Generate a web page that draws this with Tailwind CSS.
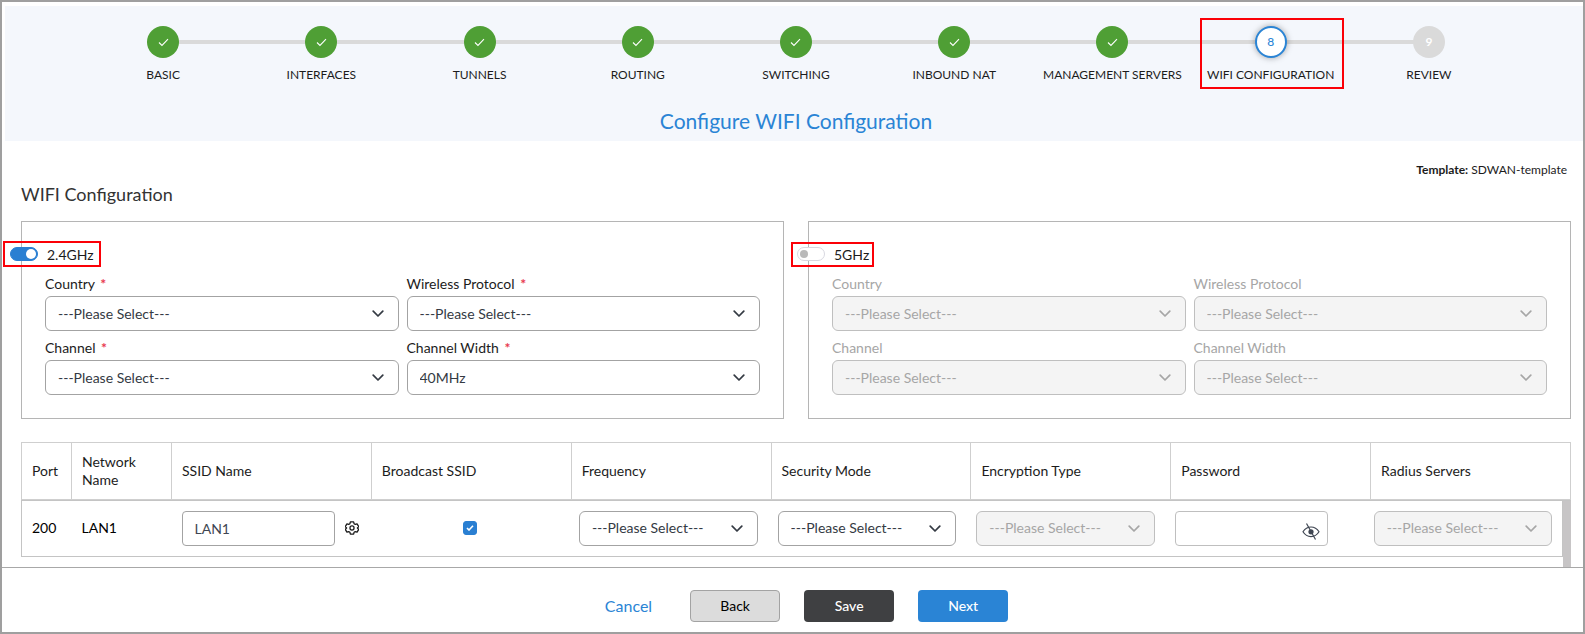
<!DOCTYPE html>
<html lang="en">
<head>
    <meta charset="UTF-8">
    <meta name="viewport" content="width=device-width, initial-scale=1.0">
    <title>Configure WIFI Configuration</title>
    <script src="https://cdn.jsdelivr.net/npm/@tailwindcss/browser@4"></script>
</head>
<body class="bg-white font-['Lato',sans-serif] text-sm text-[#1c1c1c]">

<!-- Shared icons -->
<svg class="hidden">
    <symbol id="check" viewBox="0 0 12 10"><path d="M1 5l3.3 3.2L11 1.2" fill="none" stroke="currentColor" stroke-width="1.2"/></symbol>
    <symbol id="chevron" viewBox="0 0 12 8"><path d="M1.2 1.2L6 6l4.8-4.8" fill="none" stroke="currentColor" stroke-width="1.7" stroke-linecap="round" stroke-linejoin="round"/></symbol>
</svg>

<div class="flex h-screen flex-col border-2 border-[#9f9f9f]">
    <!-- Wizard steps -->
    <header class="mt-1 ml-[3px] bg-[#f4f7fc] pt-5 pr-[75px] pb-1.5 pl-[79px]">
        <ol class="grid grid-cols-9 text-xs leading-[18px]">
            <li class="relative flex flex-col items-center gap-2">
                <span class="absolute top-3.5 left-1/2 h-1 w-full bg-[#dadada]"></span>
                <span class="relative flex size-8 items-center justify-center rounded-full bg-[#4f9f35] text-white"><svg class="h-[9px] w-[11px]"><use href="#check"/></svg></span>
                <span class="whitespace-nowrap">BASIC</span>
            </li>
            <li class="relative flex flex-col items-center gap-2">
                <span class="absolute top-3.5 left-1/2 h-1 w-full bg-[#dadada]"></span>
                <span class="relative flex size-8 items-center justify-center rounded-full bg-[#4f9f35] text-white"><svg class="h-[9px] w-[11px]"><use href="#check"/></svg></span>
                <span class="whitespace-nowrap">INTERFACES</span>
            </li>
            <li class="relative flex flex-col items-center gap-2">
                <span class="absolute top-3.5 left-1/2 h-1 w-full bg-[#dadada]"></span>
                <span class="relative flex size-8 items-center justify-center rounded-full bg-[#4f9f35] text-white"><svg class="h-[9px] w-[11px]"><use href="#check"/></svg></span>
                <span class="whitespace-nowrap">TUNNELS</span>
            </li>
            <li class="relative flex flex-col items-center gap-2">
                <span class="absolute top-3.5 left-1/2 h-1 w-full bg-[#dadada]"></span>
                <span class="relative flex size-8 items-center justify-center rounded-full bg-[#4f9f35] text-white"><svg class="h-[9px] w-[11px]"><use href="#check"/></svg></span>
                <span class="whitespace-nowrap">ROUTING</span>
            </li>
            <li class="relative flex flex-col items-center gap-2">
                <span class="absolute top-3.5 left-1/2 h-1 w-full bg-[#dadada]"></span>
                <span class="relative flex size-8 items-center justify-center rounded-full bg-[#4f9f35] text-white"><svg class="h-[9px] w-[11px]"><use href="#check"/></svg></span>
                <span class="whitespace-nowrap">SWITCHING</span>
            </li>
            <li class="relative flex flex-col items-center gap-2">
                <span class="absolute top-3.5 left-1/2 h-1 w-full bg-[#dadada]"></span>
                <span class="relative flex size-8 items-center justify-center rounded-full bg-[#4f9f35] text-white"><svg class="h-[9px] w-[11px]"><use href="#check"/></svg></span>
                <span class="whitespace-nowrap">INBOUND NAT</span>
            </li>
            <li class="relative flex flex-col items-center gap-2">
                <span class="absolute top-3.5 left-1/2 h-1 w-full bg-[#dadada]"></span>
                <span class="relative flex size-8 items-center justify-center rounded-full bg-[#4f9f35] text-white"><svg class="h-[9px] w-[11px]"><use href="#check"/></svg></span>
                <span class="whitespace-nowrap">MANAGEMENT SERVERS</span>
            </li>
            <li class="relative flex flex-col items-center gap-2" aria-current="step">
                <span class="absolute top-3.5 left-1/2 h-1 w-full bg-[#dadada]"></span>
                <span class="relative flex size-8 items-center justify-center rounded-full border-2 border-[#2a84d5] bg-white font-medium text-[#2a84d5] shadow-[0_0_6px_rgba(0,0,0,0.35)]">8</span>
                <span class="whitespace-nowrap">WIFI CONFIGURATION</span>
                <span class="absolute -top-2 left-1/2 h-[71px] w-36 -translate-x-[71px] border-2 border-[#fb0007]"></span>
            </li>
            <li class="relative flex flex-col items-center gap-2">
                <span class="relative flex size-8 items-center justify-center rounded-full bg-[#dadada] font-bold text-white">9</span>
                <span class="whitespace-nowrap">REVIEW</span>
            </li>
        </ol>
        <h1 class="mt-[23px] text-center text-[21px] leading-7 text-[#2a84d5]">Configure WIFI Configuration</h1>
    </header>

    <main class="flex min-h-0 flex-1 flex-col overflow-hidden pt-[19px] pr-3 pl-[19px]">
        <p class="pr-1 text-right text-xs leading-5"><b>Template:</b> SDWAN-template</p>
        <h2 class="mt-0.5 text-lg leading-6 text-[#333]">WIFI Configuration</h2>

        <!-- Radio bands -->
        <div class="mt-[15px] grid grid-cols-2 gap-6">
            <section class="border border-[#b5b5b5] px-[23px] pt-[22px] pb-[23px]">
                <label class="relative -ml-[35px] flex w-fit items-center gap-[9px] leading-5">
                    <span class="absolute top-[-3px] left-[-7px] h-[26px] w-[98px] border-2 border-[#fb0007]"></span>
                    <input type="checkbox" role="switch" checked class="h-3.5 w-7 appearance-none rounded-full border border-[#d8d8e0] bg-white p-0.5 before:block before:size-2 before:rounded-full before:bg-[#b9b9b9] checked:border-[#2a7fd2] checked:bg-[#2a7fd2] checked:p-px checked:before:ml-auto checked:before:size-2.5 checked:before:bg-white">
                    <span class="pt-0.5 leading-[18px]">2.4GHz</span>
                </label>
                <div class="mt-2.5 grid grid-cols-2 gap-x-2 gap-y-[7px]">
                    <div class="flex flex-col gap-0.5">
                        <label for="country24" class="leading-5">Country <span class="ml-0.5 font-bold text-[#e8384f]">*</span></label>
                        <div class="relative">
                            <select id="country24" class="h-[35px] w-full appearance-none rounded-md border border-[#a3a3a3] bg-white px-3 text-[#343a43]"><option>---Please Select---</option></select>
                            <svg class="pointer-events-none absolute top-3.5 right-[15px] h-2 w-3 text-[#343a43]"><use href="#chevron"/></svg>
                        </div>
                    </div>
                    <div class="flex flex-col gap-0.5">
                        <label for="protocol24" class="leading-5">Wireless Protocol <span class="ml-0.5 font-bold text-[#e8384f]">*</span></label>
                        <div class="relative">
                            <select id="protocol24" class="h-[35px] w-full appearance-none rounded-md border border-[#a3a3a3] bg-white px-3 text-[#343a43]"><option>---Please Select---</option></select>
                            <svg class="pointer-events-none absolute top-3.5 right-[15px] h-2 w-3 text-[#343a43]"><use href="#chevron"/></svg>
                        </div>
                    </div>
                    <div class="flex flex-col gap-0.5">
                        <label for="channel24" class="leading-5">Channel <span class="ml-0.5 font-bold text-[#e8384f]">*</span></label>
                        <div class="relative">
                            <select id="channel24" class="h-[35px] w-full appearance-none rounded-md border border-[#a3a3a3] bg-white px-3 text-[#343a43]"><option>---Please Select---</option></select>
                            <svg class="pointer-events-none absolute top-3.5 right-[15px] h-2 w-3 text-[#343a43]"><use href="#chevron"/></svg>
                        </div>
                    </div>
                    <div class="flex flex-col gap-0.5">
                        <label for="width24" class="leading-5">Channel Width <span class="ml-0.5 font-bold text-[#e8384f]">*</span></label>
                        <div class="relative">
                            <select id="width24" class="h-[35px] w-full appearance-none rounded-md border border-[#a3a3a3] bg-white px-3 text-[#343a43]"><option>40MHz</option></select>
                            <svg class="pointer-events-none absolute top-3.5 right-[15px] h-2 w-3 text-[#343a43]"><use href="#chevron"/></svg>
                        </div>
                    </div>
                </div>
            </section>

            <section class="border border-[#b5b5b5] px-[23px] pt-[22px] pb-[23px]">
                <label class="relative -ml-[35px] flex w-fit items-center gap-[9px] leading-5">
                    <span class="absolute top-[-2px] left-[-6px] h-[25px] w-[83px] border-2 border-[#fb0007]"></span>
                    <input type="checkbox" role="switch" class="h-3.5 w-7 appearance-none rounded-full border border-[#d8d8e0] bg-white p-0.5 before:block before:size-2 before:rounded-full before:bg-[#b9b9b9] checked:border-[#2a7fd2] checked:bg-[#2a7fd2] checked:p-px checked:before:ml-auto checked:before:size-2.5 checked:before:bg-white">
                    <span class="pt-0.5 leading-[18px]">5GHz</span>
                </label>
                <div class="mt-2.5 grid grid-cols-2 gap-x-2 gap-y-[7px] text-[#a6a6a6]">
                    <div class="flex flex-col gap-0.5">
                        <label for="country5" class="leading-5">Country</label>
                        <div class="relative">
                            <select id="country5" disabled class="h-[35px] w-full appearance-none rounded-md border border-[#bfbfbf] bg-[#f4f4f4] px-3 text-[#a6a6a6] opacity-100"><option>---Please Select---</option></select>
                            <svg class="pointer-events-none absolute top-3.5 right-[15px] h-2 w-3"><use href="#chevron"/></svg>
                        </div>
                    </div>
                    <div class="flex flex-col gap-0.5">
                        <label for="protocol5" class="leading-5">Wireless Protocol</label>
                        <div class="relative">
                            <select id="protocol5" disabled class="h-[35px] w-full appearance-none rounded-md border border-[#bfbfbf] bg-[#f4f4f4] px-3 text-[#a6a6a6] opacity-100"><option>---Please Select---</option></select>
                            <svg class="pointer-events-none absolute top-3.5 right-[15px] h-2 w-3"><use href="#chevron"/></svg>
                        </div>
                    </div>
                    <div class="flex flex-col gap-0.5">
                        <label for="channel5" class="leading-5">Channel</label>
                        <div class="relative">
                            <select id="channel5" disabled class="h-[35px] w-full appearance-none rounded-md border border-[#bfbfbf] bg-[#f4f4f4] px-3 text-[#a6a6a6] opacity-100"><option>---Please Select---</option></select>
                            <svg class="pointer-events-none absolute top-3.5 right-[15px] h-2 w-3"><use href="#chevron"/></svg>
                        </div>
                    </div>
                    <div class="flex flex-col gap-0.5">
                        <label for="width5" class="leading-5">Channel Width</label>
                        <div class="relative">
                            <select id="width5" disabled class="h-[35px] w-full appearance-none rounded-md border border-[#bfbfbf] bg-[#f4f4f4] px-3 text-[#a6a6a6] opacity-100"><option>---Please Select---</option></select>
                            <svg class="pointer-events-none absolute top-3.5 right-[15px] h-2 w-3"><use href="#chevron"/></svg>
                        </div>
                    </div>
                </div>
            </section>
        </div>

        <table class="mt-[23px] w-full table-fixed border-collapse leading-[18px]">
            <thead>
                <tr class="h-[57px] text-left *:border *:border-[#cfcfcf] *:px-2.5 *:font-normal">
                    <th class="w-[50px]">Port</th>
                    <th class="w-[100px]">Network Name</th>
                    <th>SSID Name</th>
                    <th>Broadcast SSID</th>
                    <th>Frequency</th>
                    <th>Security Mode</th>
                    <th>Encryption Type</th>
                    <th>Password</th>
                    <th>Radius Servers</th>
                </tr>
            </thead>
        </table>
        <div class="flex min-h-0 flex-1 border-t border-[#c4c4c4]">
            <div class="min-w-0 flex-1">
                <table class="w-full table-fixed border-collapse border-r border-b border-l border-[#c4c4c4] text-black">
                    <tbody>
                        <tr class="h-[55px] *:px-2.5">
                            <td class="w-[50px]">200</td>
                            <td class="w-[100px]">LAN1</td>
                            <td>
                                <div class="flex items-center gap-2.5">
                                    <input type="text" value="LAN1" aria-label="SSID Name" class="h-[35px] w-[153px] rounded border border-[#a3a3a3] px-3 text-[#3f4652]">
                                    <button type="button" aria-label="SSID settings" class="text-[#1c1c1c]">
                                        <svg class="size-3.5" viewBox="0 0 24 24" fill="none" stroke="currentColor" stroke-width="2.2" stroke-linejoin="round">
                                            <path d="M9.2 1.5h5.6l.8 3.2 2 1.1 3.1-.9 2.8 4.7-2.3 2.3v.2l2.3 2.3-2.8 4.7-3.1-.9-2 1.1-.8 3.2H9.2l-.8-3.2-2-1.1-3.1.9-2.8-4.7 2.3-2.3v-.2L.5 9.6l2.8-4.7 3.1.9 2-1.1z"/>
                                            <circle cx="12" cy="12" r="3.5"/>
                                        </svg>
                                    </button>
                                </div>
                            </td>
                            <td>
                                <div class="grid place-items-center">
                                    <input type="checkbox" checked aria-label="Broadcast SSID" class="peer col-start-1 row-start-1 size-3.5 appearance-none rounded-[3px] border border-[#a3a3a3] checked:border-[#2a7fd2] checked:bg-[#2a7fd2]">
                                    <svg class="pointer-events-none col-start-1 row-start-1 hidden h-1.5 w-2 text-white peer-checked:block" viewBox="0 0 8 6" fill="none" stroke="currentColor" stroke-width="1.6"><path d="M1 3l2 2 4-4.2"/></svg>
                                </div>
                            </td>
                            <td>
                                <div class="relative">
                                    <select aria-label="Frequency" class="h-[35px] w-full appearance-none rounded-md border border-[#a3a3a3] bg-white px-3 text-[#343a43]"><option>---Please Select---</option></select>
                                    <svg class="pointer-events-none absolute top-3.5 right-[15px] h-2 w-3 text-[#343a43]"><use href="#chevron"/></svg>
                                </div>
                            </td>
                            <td>
                                <div class="relative">
                                    <select aria-label="Security Mode" class="h-[35px] w-full appearance-none rounded-md border border-[#a3a3a3] bg-white px-3 text-[#343a43]"><option>---Please Select---</option></select>
                                    <svg class="pointer-events-none absolute top-3.5 right-[15px] h-2 w-3 text-[#343a43]"><use href="#chevron"/></svg>
                                </div>
                            </td>
                            <td>
                                <div class="relative text-[#a6a6a6]">
                                    <select aria-label="Encryption Type" disabled class="h-[35px] w-full appearance-none rounded-md border border-[#bfbfbf] bg-[#f4f4f4] px-3 text-[#a6a6a6] opacity-100"><option>---Please Select---</option></select>
                                    <svg class="pointer-events-none absolute top-3.5 right-[15px] h-2 w-3"><use href="#chevron"/></svg>
                                </div>
                            </td>
                            <td>
                                <div class="relative w-[153px]">
                                    <input type="password" aria-label="Password" class="block h-[35px] w-full rounded border border-[#bfbfbf] pr-8 pl-3">
                                    <button type="button" aria-label="Show password" class="absolute top-3 right-2 text-[#3f4652]">
                                        <svg class="h-[17px] w-[18px]" viewBox="0 0 18 17" fill="none" stroke="currentColor" stroke-width="1.2">
                                            <path d="M1 8.8C3 5.6 5.8 4 9 4s6 1.6 8 4.8c-2 3.2-4.8 4.8-8 4.8S3 12 1 8.8z"/>
                                            <circle cx="9" cy="8.8" r="2.6" fill="currentColor" stroke="none"/>
                                            <path d="M4.5.5l9 16"/>
                                        </svg>
                                    </button>
                                </div>
                            </td>
                            <td>
                                <div class="relative text-[#a6a6a6]">
                                    <select aria-label="Radius Servers" disabled class="h-[35px] w-full appearance-none rounded-md border border-[#bfbfbf] bg-[#f4f4f4] px-3 text-[#a6a6a6] opacity-100"><option>---Please Select---</option></select>
                                    <svg class="pointer-events-none absolute top-3.5 right-[15px] h-2 w-3"><use href="#chevron"/></svg>
                                </div>
                            </td>
                        </tr>
                    </tbody>
                </table>
            </div>
            <div class="w-2 bg-[#c7c5c6]"></div>
        </div>
    </main>

    <!-- Actions -->
    <footer class="flex items-center justify-center gap-6 border-t border-[#a8a8a8] pt-[22px] pb-2.5 pl-7">
        <button type="button" class="mr-3.5 text-base leading-8 text-[#2a84d5]">Cancel</button>
        <button type="button" class="h-8 w-[90px] rounded border border-[#a3a3a3] bg-[#dcdcdc] text-black">Back</button>
        <button type="button" class="h-8 w-[90px] rounded bg-[#3f4042] font-medium text-white">Save</button>
        <button type="button" class="h-8 w-[90px] rounded bg-[#2a84d5] font-medium text-white">Next</button>
    </footer>
</div>
</body>
</html>
